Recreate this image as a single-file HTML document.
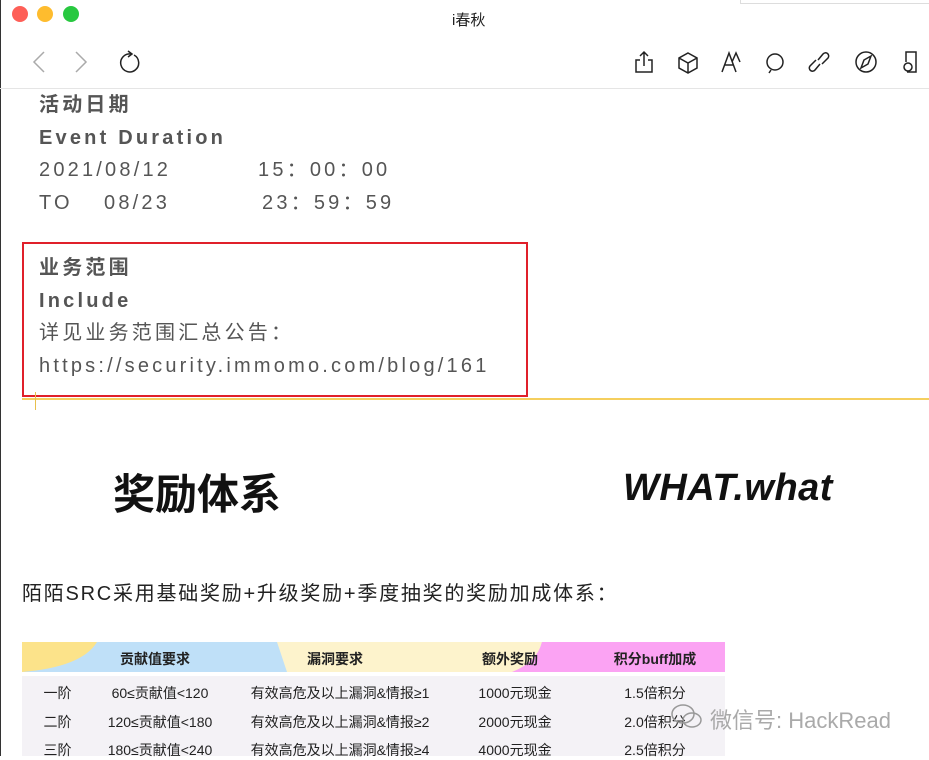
<!DOCTYPE html>
<html><head><meta charset="utf-8"><style>
body{margin:0;width:929px;height:756px;overflow:hidden;background:#fff;font-family:"Liberation Sans","Noto Sans CJK SC",sans-serif;position:relative}
.a{position:absolute;white-space:nowrap}
.g{color:#555;font-size:20px;letter-spacing:3.2px;line-height:24px}
.b{font-weight:bold}
.dot{position:absolute;top:6px;width:16px;height:16px;border-radius:50%}
.ic{position:absolute;top:50px}
.t{position:absolute;font-size:14px;color:#222;text-align:center}
</style></head><body>
<div style="position:absolute;left:0;top:0;width:1px;height:756px;background:#333"></div>
<div class="dot" style="left:12px;background:#fe5f57"></div>
<div class="dot" style="left:37px;background:#febc2e"></div>
<div class="dot" style="left:63px;background:#28c840"></div>
<div class="a" style="left:452px;top:9px;font-size:15px;color:#222">i春秋</div>
<div style="position:absolute;left:740px;top:0;width:189px;height:3px;border:1px solid #ddd;border-top:none"></div>
<svg class="ic" style="left:28px" width="120" height="24" fill="none" stroke-width="1.5">
<path d="M16 2 L6 12 L16 22" stroke="#aaa"/><path d="M48 2 L58 12 L48 22" stroke="#aaa"/>
<path d="M103 4 A9 9 0 1 0 106 5" stroke="#222"/><path d="M100 1 L104 4 L100 7" stroke="#222"/></svg>
<svg class="ic" style="left:630px" width="295" height="24" fill="none" stroke="#222" stroke-width="1.5">
<path d="M10 10 H6 V22 H22 V10 H18 M14 16 V2 M10 6 L14 2 L18 6"/>
<path d="M58 3 L67 8 V18 L58 23 L49 18 V8 Z M49 8 L58 13 L67 8 M58 13 V23"/>
<path d="M92 22 L99 3 L106 22 M95 15 H103 M102 12 L106 3 L110 12"/>
<circle cx="145" cy="12" r="8"/><path d="M141 20 L139 23"/>
<path d="M186 10 L180 16 A3 3 0 0 0 185 20 L190 14 M192 14 L198 8 A3 3 0 0 0 193 4 L188 10"/>
<circle cx="236" cy="12" r="10"/><path d="M241 6 L238 14 L231 18 L234 10 Z"/>
<path d="M276 12 V2 H286 V22 H277"/><circle cx="278" cy="17" r="4"/></svg>
<div style="position:absolute;left:0;top:88px;width:929px;height:1px;background:#e5e5e5"></div>
<div class="a g b" style="left:39px;top:93px">活动日期</div>
<div class="a g b" style="left:39px;top:126px">Event Duration</div>
<div class="a g" style="left:39px;top:158px">2021/08/12</div>
<div class="a g" style="left:258px;top:158px">15：00：00</div>
<div class="a g" style="left:39px;top:191px">TO</div>
<div class="a g" style="left:104px;top:191px">08/23</div>
<div class="a g" style="left:262px;top:191px">23：59：59</div>
<div style="position:absolute;left:22px;top:242px;width:502px;height:151px;border:2px solid #e0202a"></div>
<div class="a g b" style="left:39px;top:256px">业务范围</div>
<div class="a g b" style="left:39px;top:289px">Include</div>
<div class="a g" style="left:39px;top:321px">详见业务范围汇总公告：</div>
<div class="a g" style="left:39px;top:354px">https://security.immomo.com/blog/161</div>
<div style="position:absolute;left:22px;top:398px;width:907px;height:2px;background:#f5cf5e"></div>
<div style="position:absolute;left:35px;top:392px;width:1px;height:18px;background:#e8c04d"></div>
<div class="a b" style="left:113px;top:461px;font-size:42px;color:#111">奖励体系</div>
<div class="a b" style="left:623px;top:467px;font-size:38px;letter-spacing:0.5px;color:#111;font-style:italic">WHAT.what</div>
<div class="a" style="left:22px;top:577px;font-size:20px;letter-spacing:1.75px;color:#222">陌陌SRC采用基础奖励+升级奖励+季度抽奖的奖励加成体系：</div>
<svg style="position:absolute;left:22px;top:642px" width="703" height="30">
<rect width="703" height="30" fill="#bfe0f8"/>
<path d="M0 0 H75 Q60 25 0 30 Z" fill="#fce38a"/>
<path d="M255 0 H520 L510 30 H265 Z" fill="#fdf3cc"/>
<path d="M520 0 H703 V30 H490 Q515 20 520 0 Z" fill="#fba3f3"/></svg>
<div style="position:absolute;left:22px;top:676px;width:703px;height:80px;background:#f4f2f6"></div>
<div class="t b" style="left:100px;top:649px;width:110px">贡献值要求</div>
<div class="t b" style="left:280px;top:649px;width:110px">漏洞要求</div>
<div class="t b" style="left:455px;top:649px;width:110px">额外奖励</div>
<div class="t b" style="left:600px;top:649px;width:110px">积分buff加成</div>
<div class="t" style="left:35px;top:683px;width:45px">一阶</div><div class="t" style="left:90px;top:683px;width:140px">60≤贡献值&lt;120</div><div class="t" style="left:235px;top:683px;width:210px">有效高危及以上漏洞&amp;情报≥1</div><div class="t" style="left:460px;top:683px;width:110px">1000元现金</div><div class="t" style="left:600px;top:683px;width:110px">1.5倍积分</div>
<div class="t" style="left:35px;top:712px;width:45px">二阶</div><div class="t" style="left:90px;top:712px;width:140px">120≤贡献值&lt;180</div><div class="t" style="left:235px;top:712px;width:210px">有效高危及以上漏洞&amp;情报≥2</div><div class="t" style="left:460px;top:712px;width:110px">2000元现金</div><div class="t" style="left:600px;top:712px;width:110px">2.0倍积分</div>
<div class="t" style="left:35px;top:740px;width:45px">三阶</div><div class="t" style="left:90px;top:740px;width:140px">180≤贡献值&lt;240</div><div class="t" style="left:235px;top:740px;width:210px">有效高危及以上漏洞&amp;情报≥4</div><div class="t" style="left:460px;top:740px;width:110px">4000元现金</div><div class="t" style="left:600px;top:740px;width:110px">2.5倍积分</div>
<svg style="position:absolute;left:670px;top:702px" width="34" height="30" fill="none" stroke="#999" stroke-width="1.5"><ellipse cx="13" cy="12" rx="11" ry="9"/><ellipse cx="22" cy="18" rx="9" ry="7"/></svg>
<div class="a" style="left:710px;top:703px;font-size:22px;color:#aaa">微信号: HackRead</div>
</body></html>
